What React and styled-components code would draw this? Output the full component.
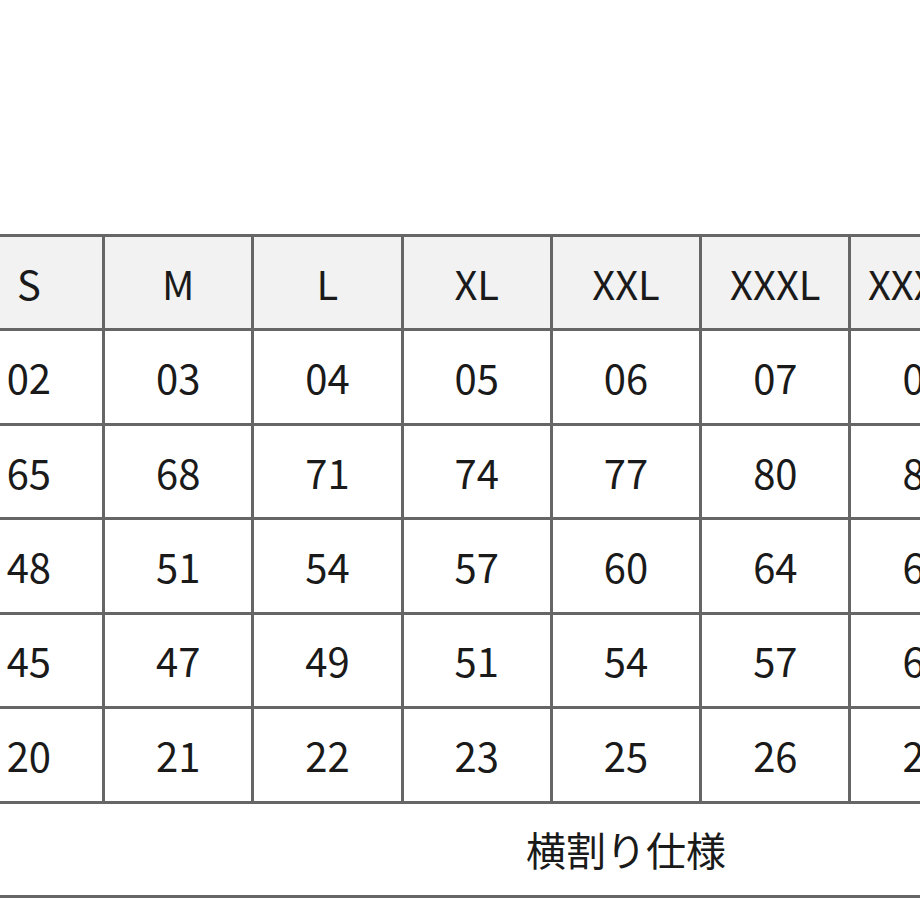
import React from "react";
import styled, { createGlobalStyle } from "styled-components";

const GlobalStyle = createGlobalStyle`
  html, body {
    margin: 0;
    padding: 0;
    background: #fff;
    overflow: hidden;
  }
`;

const Page = styled.div`
  width: 920px;
  height: 920px;
  padding-top: 234px;
  box-sizing: border-box;
  overflow: hidden;
`;

// grid lines come from the gap showing the dark background
const SizeGrid = styled.div`
  display: grid;
  grid-template-columns: repeat(9, 146.3px);
  grid-auto-rows: 91.43px;
  gap: 3px;
  padding: 3px;
  width: max-content;
  margin-left: -47.3px;
  background: #666;
  font-family: "Noto Sans CJK JP", "Noto Sans", sans-serif;
  font-size: 40px;
  color: #1a1a1a;
`;

const Cell = styled.div`
  display: flex;
  align-items: center;
  justify-content: center;
  background: ${(p) => (p.head ? "#f2f2f2" : "#fff")};
  white-space: nowrap;
  overflow: hidden;
`;

const NoteCell = styled(Cell)`
  grid-column: 1 / -1;
`;

const sizes = ["S", "M", "L", "XL", "XXL", "XXXL", "XXXXL", "5XL", "6XL"];

const rows = [
  ["02", "03", "04", "05", "06", "07", "08", "09", "10"],
  ["65", "68", "71", "74", "77", "80", "83", "86", "89"],
  ["48", "51", "54", "57", "60", "64", "67", "70", "73"],
  ["45", "47", "49", "51", "54", "57", "60", "63", "66"],
  ["20", "21", "22", "23", "25", "26", "27", "28", "29"],
];

const App = () => {
  return (
    <Page>
      <GlobalStyle />
      <SizeGrid>
        {sizes.map((s) => (
          <Cell head key={s}>
            {s}
          </Cell>
        ))}
        {rows.map((row, i) =>
          row.map((v, j) => <Cell key={`${i}-${j}`}>{v}</Cell>)
        )}
        <NoteCell>横割り仕様</NoteCell>
      </SizeGrid>
    </Page>
  );
};

export default App;
